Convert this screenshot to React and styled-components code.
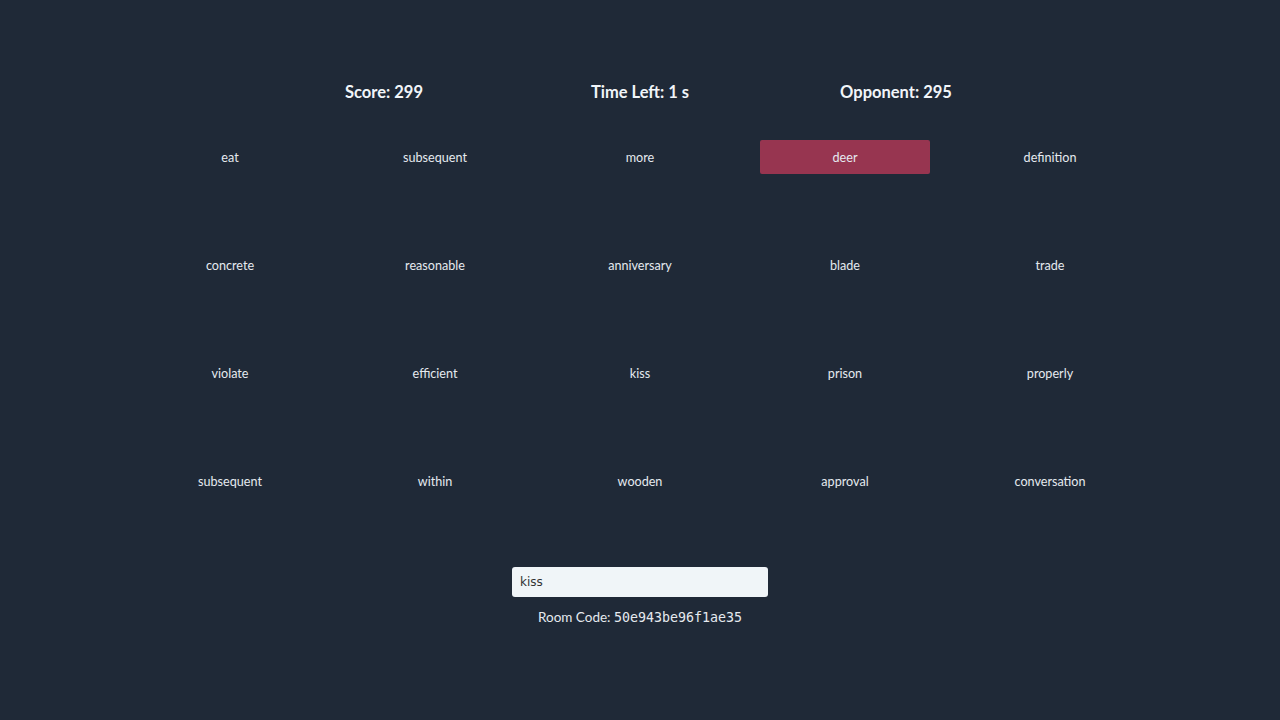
import React, { useState } from "react";
import styled, { createGlobalStyle } from "styled-components";

const words = [
  "eat", "subsequent", "more", "deer", "definition",
  "concrete", "reasonable", "anniversary", "blade", "trade",
  "violate", "efficient", "kiss", "prison", "properly",
  "subsequent", "within", "wooden", "approval", "conversation",
];

const GlobalStyle = createGlobalStyle`
  html, body {
    margin: 0;
    background: #1f2937;
  }
  body {
    font-family: Lato, "Open Sans", sans-serif;
    color: #f1f5f9;
  }
`;

const App = () => {
  const [guess, setGuess] = useState("kiss");
  return (
    <Page>
      <GlobalStyle />
      <ScoreBar>
        <Stat>Score: 299</Stat>
        <Stat>Time Left: 1 s</Stat>
        <Stat>Opponent: 295</Stat>
      </ScoreBar>
      <Board>
        {words.map((word, i) => (
          <Cell key={i} $hit={word === "deer"}>
            {word}
          </Cell>
        ))}
      </Board>
      <GuessInput value={guess} onChange={(e) => setGuess(e.target.value)} />
      <RoomCode>
        Room Code: <code>50e943be96f1ae35</code>
      </RoomCode>
    </Page>
  );
};

const Page = styled.div`
  width: 1280px;
  height: 720px;
  display: flex;
  flex-direction: column;
  align-items: center;
  padding-top: 82px;
  box-sizing: border-box;
`;

const ScoreBar = styled.div`
  display: grid;
  grid-template-columns: repeat(3, 256px);
  justify-items: center;
  margin-bottom: 38px;
`;

const Stat = styled.div`
  font-size: 16.5px;
  font-weight: 700;
  line-height: 20px;
`;

const Board = styled.div`
  display: grid;
  grid-template-columns: repeat(5, 170px);
  grid-auto-rows: 34px;
  column-gap: 35px;
  row-gap: 74px;
  margin-bottom: 69px;
`;

const Cell = styled.div`
  display: flex;
  align-items: center;
  justify-content: center;
  font-size: 12.6px;
  color: #e5e9ef;
  border-radius: 2px;
  background: ${(p) => (p.$hit ? "#973550" : "transparent")};
`;

const GuessInput = styled.input`
  width: 256px;
  height: 30px;
  box-sizing: border-box;
  border: none;
  border-radius: 3px;
  background: #f0f5f8;
  padding: 0 8px;
  font-family: "DejaVu Sans", sans-serif;
  font-size: 12px;
  color: #333;
  outline: none;
`;

const RoomCode = styled.div`
  margin-top: 12px;
  font-size: 13.5px;
  color: #e5e9ef;
  code {
    font-family: "DejaVu Sans Mono", monospace;
    font-size: 13.3px;
  }
`;

export default App;
